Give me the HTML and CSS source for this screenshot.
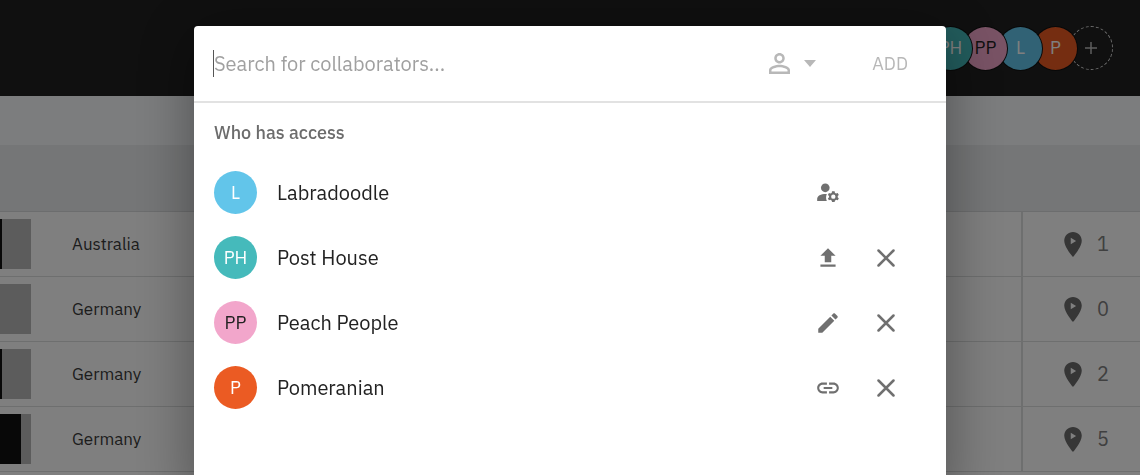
FILE: index.html
```html
<!DOCTYPE html>
<html lang="en">
<head>
  <meta charset="UTF-8" />
  <meta name="viewport" content="width=device-width, initial-scale=1" />
  <title>Collaborators</title>
  <link rel="stylesheet" href="styles.css">
</head>
<body>
  <!-- shared icons -->
  <svg class="sprite" aria-hidden="true">
    <symbol id="pin" viewBox="5 2 14 20">
      <path fill-rule="evenodd" d="M12 2C8.13 2 5 5.13 5 9c0 5.25 7 13 7 13s7-7.75 7-13c0-3.87-3.13-7-7-7zM10.2 6.5l4.3 2.6-4.3 2.6z" />
    </symbol>
    <symbol id="close" viewBox="0 0 18 18">
      <path d="M1.5 1.5l15 15M16.5 1.5l-15 15" fill="none" stroke="currentColor" stroke-width="2.5" stroke-linecap="round" />
    </symbol>
  </svg>

  <header class="topbar">
    <div class="team">
      <span class="avatar teal">PH</span>
      <span class="avatar pink">PP</span>
      <span class="avatar blue">L</span>
      <span class="avatar orange">P</span>
      <button class="team-add" aria-label="Add collaborator">
        <svg viewBox="0 0 12 12" width="12" height="12"><path d="M6 0v12M0 6h12" fill="none" stroke="currentColor" stroke-width="1.5" /></svg>
      </button>
    </div>
  </header>
  <div class="toolbar"></div>
  <div class="table-head"></div>

  <table class="places">
    <tr>
      <td class="thumb"><div class="bar"><div class="fill" style="width: 5%"></div></div></td>
      <td class="country">Australia</td>
      <td class="count"><div class="count-inner"><svg class="pin"><use href="#pin" /></svg>1</div></td>
    </tr>
    <tr>
      <td class="thumb"><div class="bar"></div></td>
      <td class="country">Germany</td>
      <td class="count"><div class="count-inner"><svg class="pin"><use href="#pin" /></svg>0</div></td>
    </tr>
    <tr>
      <td class="thumb"><div class="bar"><div class="fill" style="width: 5%"></div></div></td>
      <td class="country">Germany</td>
      <td class="count"><div class="count-inner"><svg class="pin"><use href="#pin" /></svg>2</div></td>
    </tr>
    <tr>
      <td class="thumb"><div class="bar"><div class="fill" style="width: 67%"></div></div></td>
      <td class="country">Germany</td>
      <td class="count"><div class="count-inner"><svg class="pin"><use href="#pin" /></svg>5</div></td>
    </tr>
  </table>

  <div class="overlay">
    <div class="modal" role="dialog" aria-label="Collaborators">
      <form class="search">
        <input class="search-input" type="text" placeholder="Search for collaborators..." aria-label="Search for collaborators" />
        <button class="role" type="button" aria-haspopup="true" aria-label="Role">
          <svg viewBox="4 4 16 16" width="21" height="21"><path d="M12 5.9c1.16 0 2.1.94 2.1 2.1s-.94 2.1-2.1 2.1S9.9 9.16 9.9 8s.94-2.1 2.1-2.1m0 9c2.97 0 6.1 1.46 6.1 2.1v1.1H5.9V17c0-.64 3.13-2.1 6.1-2.1M12 4C9.79 4 8 5.79 8 8s1.79 4 4 4 4-1.79 4-4-1.79-4-4-4zm0 9c-2.67 0-8 1.34-8 4v3h16v-3c0-2.66-5.33-4-8-4z" /></svg>
          <svg viewBox="0 0 12 7" width="12" height="7"><path d="M0 0h12L6 7z" /></svg>
        </button>
        <button class="add" type="submit">ADD</button>
      </form>

      <h2 class="access-title">Who has access</h2>
      <ul class="people">
        <li class="person">
          <span class="avatar blue">L</span>
          <span class="name">Labradoodle</span>
          <button class="icon-btn" aria-label="Owner">
            <svg viewBox="0 0 24 24" width="26" height="26"><circle cx="9.5" cy="7.2" r="4" /><path d="M10.2 13c-5 0-8.2 1.8-8.2 4.6V19.4h8.9c-.9-2.1-.9-4.4 0-6.4z" /><path transform="translate(-.2 -.6)" d="M21.2 16c0-.22-.03-.42-.06-.63l1.04-1.01-1-1.73-1.45.49c-.32-.27-.68-.48-1.08-.63L18.3 11h-2.4l-.3 1.49c-.4.15-.76.36-1.08.63l-1.45-.49-1 1.73 1.14 1.01c-.03.21-.06.41-.06.63s.03.42.06.63l-1.14 1.01 1 1.73 1.45-.49c.32.27.68.48 1.08.63l.3 1.49h2.4l.35-1.49c.4-.15.76-.36 1.08-.63l1.45.49 1-1.73-1.04-1.01c.03-.21.06-.41.06-.63zM17.1 18a2 2 0 1 1 0-4 2 2 0 0 1 0 4z" /></svg>
          </button>
        </li>
        <li class="person">
          <span class="avatar teal">PH</span>
          <span class="name">Post House</span>
          <button class="icon-btn" aria-label="Can upload">
            <svg viewBox="0 0 24 24" width="26" height="26"><path d="M5 20h14v-2H5v2zm0-10h4v6h6v-6h4l-7-7-7 7z" /></svg>
          </button>
          <button class="icon-btn" aria-label="Remove Post House"><svg class="close"><use href="#close" /></svg></button>
        </li>
        <li class="person">
          <span class="avatar pink">PP</span>
          <span class="name">Peach People</span>
          <button class="icon-btn" aria-label="Can edit">
            <svg viewBox="0 0 24 24" width="26" height="26"><path d="M3 17.25V21h3.75L17.81 9.94l-3.75-3.75L3 17.25zM20.71 7.04c.39-.39.39-1.02 0-1.41l-2.34-2.34c-.39-.39-1.02-.39-1.41 0l-1.83 1.83 3.75 3.75 1.83-1.83z" /></svg>
          </button>
          <button class="icon-btn" aria-label="Remove Peach People"><svg class="close"><use href="#close" /></svg></button>
        </li>
        <li class="person">
          <span class="avatar orange">P</span>
          <span class="name">Pomeranian</span>
          <button class="icon-btn" aria-label="Invited by link">
            <svg viewBox="0 0 24 24" width="26" height="26"><path d="M3.9 12c0-1.71 1.39-3.1 3.1-3.1h4V7H7c-2.76 0-5 2.24-5 5s2.24 5 5 5h4v-1.9H7c-1.71 0-3.1-1.39-3.1-3.1zM8 13h8v-2H8v2zm9-6h-4v1.9h4c1.71 0 3.1 1.39 3.1 3.1s-1.39 3.1-3.1 3.1h-4V17h4c2.76 0 5-2.24 5-5s-2.24-5-5-5z" /></svg>
          </button>
          <button class="icon-btn" aria-label="Remove Pomeranian"><svg class="close"><use href="#close" /></svg></button>
        </li>
      </ul>
    </div>
  </div>
</body>
</html>
```
FILE: styles.css
```css
* {
  box-sizing: border-box;
}

body {
  margin: 0;
  height: 100vh;
  overflow: hidden;
  background: #fff;
  color: #222;
  font-family: "IBM Plex Sans", Roboto, "Liberation Sans", sans-serif;
  font-size: 20px;
  line-height: 24px;
}

button {
  padding: 0;
  border: none;
  background: none;
  color: inherit;
  font: inherit;
  cursor: pointer;
}

svg {
  display: block;
  fill: currentColor;
}

.sprite {
  position: absolute;
  width: 0;
  height: 0;
}

/* page behind the dialog */
.topbar {
  display: flex;
  align-items: center;
  justify-content: flex-end;
  height: 96px;
  padding-right: 27px;
  background: #202020;
}

.team {
  display: flex;
  align-items: center;
  isolation: isolate;
}

/* each avatar covers the one on its right */
.team .avatar {
  position: relative;
  z-index: 1;
  margin-right: -8px;
  box-shadow: 0 0 0 1px #111;
}

.team .teal {
  z-index: 4;
}

.team .pink {
  z-index: 3;
}

.team .blue {
  z-index: 2;
}

.team-add {
  display: flex;
  align-items: center;
  justify-content: center;
  width: 44px;
  height: 44px;
  border: 1px dashed #ddd;
  border-radius: 50%;
  color: #bbb;
}

.toolbar {
  height: 49px;
  background: #f8fafc;
}

.table-head {
  height: 67px;
  background: #eaecee;
  border-bottom: 1px solid #d8dadc;
}

.places {
  width: 100%;
  border-spacing: 0;
}

.places td {
  height: 65px;
  padding: 0;
  border-bottom: 1px solid #dcdede;
}

.thumb {
  width: 31px;
}

.bar {
  height: 50px;
  background: #b8b8b8;
}

.fill {
  height: 100%;
  background: #111;
}

.places .country {
  padding-left: 41px;
  color: #3a3a3a;
  font-size: 17px;
}

.places .count {
  width: 119px;
  border-left: 2px solid #dcdede;
  color: #808080;
}

.count-inner {
  display: flex;
  align-items: center;
  gap: 15px;
  padding-left: 41px;
}

.pin {
  width: 18px;
  height: 25px;
  color: #6c6c6c;
}

.avatar {
  display: flex;
  align-items: center;
  justify-content: center;
  width: 43px;
  height: 43px;
  border-radius: 50%;
  color: #fff;
  font-size: 18px;
}

.blue {
  background: #62c5ea;
}

.teal {
  background: #45babb;
}

.pink {
  background: #f2a6cb;
  color: #222;
}

.orange {
  background: #eb5b23;
}

/* dialog */
.overlay {
  position: fixed;
  inset: 0;
  padding: 26px 20px 0;
  background: rgba(0, 0, 0, 0.5);
  overflow: hidden;
}

.modal {
  max-width: 752px;
  min-height: 100vh;
  margin: 0 auto;
  background: #fff;
  border-radius: 4px;
  box-shadow: 0 8px 60px rgba(0, 0, 0, 0.38);
}

.search {
  display: flex;
  align-items: center;
  height: 77px;
  padding: 0 38px 0 19px;
  border-bottom: 2px solid #e2e2e2;
  color: #b8b8b8;
}

.search-input {
  flex: 1;
  min-width: 0;
  height: 27px;
  padding: 0;
  border: none;
  border-left: 1px solid #555;
  outline: none;
  background: none;
  color: #222;
  font: inherit;
}

.search-input::placeholder {
  color: #a0a0a0;
}

.role {
  display: flex;
  align-items: center;
  gap: 14px;
  margin-right: 56px;
}

.add {
  font-size: 18px;
}

.access-title {
  margin: 0;
  padding: 18px 20px 15px;
  color: #6c6c6c;
  font-size: 18px;
  font-weight: 500;
}

.people {
  margin: 0;
  padding: 0;
  list-style: none;
}

.person {
  display: grid;
  grid-template-columns: 43px 1fr 38px 38px;
  align-items: center;
  column-gap: 20px;
  height: 65px;
  padding: 0 41px 0 20px;
}

.icon-btn {
  display: flex;
  align-items: center;
  justify-content: center;
  height: 38px;
  color: #707070;
}

.close {
  width: 18px;
  height: 18px;
}
```
